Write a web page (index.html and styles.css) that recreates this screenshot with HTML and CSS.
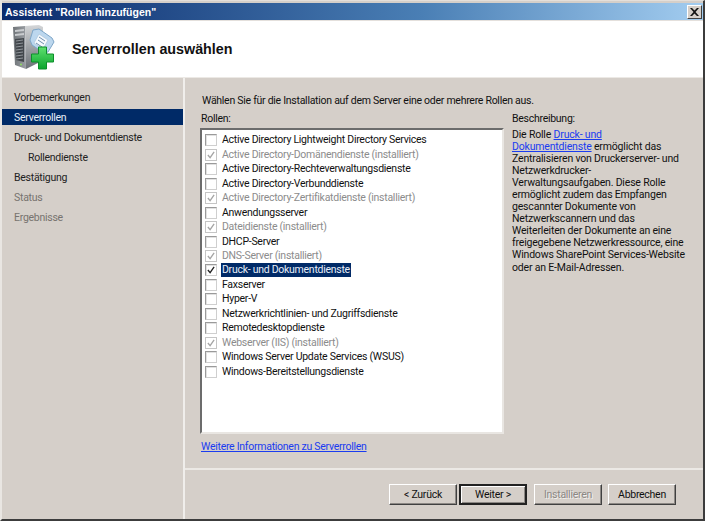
FILE: index.html
```html
<!DOCTYPE html>
<html lang="de">
<head>
<meta charset="utf-8">
<title>Assistent "Rollen hinzufügen"</title>
<link rel="stylesheet" href="styles.css">
</head>
<body>
<div class="window">
  <div class="titlebar">
    <span class="title">Assistent "Rollen hinzufügen"</span>
    <span class="close"><svg width="9" height="8" viewBox="0 0 9 8"><path d="M0 0h2l2.500 2.500L7 0h2L5.500 4 9 8H7L4.500 5.500 2 8H0l3.500-4z" fill="#111"/></svg></span>
  </div>
  <header class="header">
    <svg class="logo" width="42" height="46" viewBox="0 0 42 46">
      <defs>
        <linearGradient id="front" x1="0" x2="1" y1="0" y2="0"><stop offset="0" stop-color="#6f7478"/><stop offset="1" stop-color="#9a9ea3"/></linearGradient>
        <linearGradient id="side" x1="0" x2="0" y1="0" y2="1"><stop offset="0" stop-color="#d4d6d8"/><stop offset="1" stop-color="#6b7076"/></linearGradient>
        <linearGradient id="plus" x1="0" x2="0" y1="0" y2="1"><stop offset="0" stop-color="#5fe070"/><stop offset="1" stop-color="#0aa52c"/></linearGradient>
      </defs>
      <path d="M0 2l12-1 1 43-11-4z" fill="url(#front)"/>
      <path d="M12 1l14-1 4 2-1 34-16 8z" fill="url(#side)"/>
      <path d="M2 5l9-1v2l-9 1zM2 9l9-1v2l-9 1z" fill="#c9cccf"/>
      <path d="M2 14l9-1v24l-8-2z" fill="#42474c"/>
      <path d="M3 16l7-1M3 19l7-1M3 22l7-1M3 25l7-1M3 28l7-1M3 31l7-1M3 34l7-1" stroke="#8f9499" stroke-width="1"/>
      <circle cx="8" cy="39.500" r="1" fill="#8fe060"/>
      <path d="M20 5l6-1 13 9 2 4-6 10-4 1-12-8-2-5z" fill="#bcd7ee" stroke="#7ea6c8"/>
      <path d="M26 9l9 6-5 9-9-6z" fill="#f5f9fd" stroke="#a5bfd5" stroke-width=".6"/>
      <path d="M26 12l6 4M25 15l6 4M23 18l6 4" stroke="#6e8fae" stroke-width="1"/>
      <path d="M25.500 22h8v7h7v8h-7v7h-8v-7h-7v-8h7z" fill="url(#plus)" stroke="#0c8f2b" stroke-width="1"/>
    </svg>
    <h1 class="heading">Serverrollen auswählen</h1>
  </header>
  <div class="body">
    <nav class="sidebar">
      <div class="step">Vorbemerkungen</div>
      <div class="step current">Serverrollen</div>
      <div class="step">Druck- und Dokumentdienste</div>
      <div class="step sub">Rollendienste</div>
      <div class="step">Bestätigung</div>
      <div class="step muted">Status</div>
      <div class="step muted">Ergebnisse</div>
    </nav>
    <div class="pane">
      <main class="content">
        <p class="intro">Wählen Sie für die Installation auf dem Server eine oder mehrere Rollen aus.</p>
        <div class="columns">
          <section class="roles">
            <div class="label">Rollen:</div>
            <ul class="listbox">
              <li class="item"><span class="box"></span><span class="text">Active Directory Lightweight Directory Services</span></li>
              <li class="item off"><span class="box on"><svg width="9" height="9" viewBox="0 0 9 9"><path d="M1 4.500l2.500 3L8 1" class="tick"/></svg></span><span class="text">Active Directory-Domänendienste (installiert)</span></li>
              <li class="item"><span class="box"></span><span class="text">Active Directory-Rechteverwaltungsdienste</span></li>
              <li class="item"><span class="box"></span><span class="text">Active Directory-Verbunddienste</span></li>
              <li class="item off"><span class="box on"><svg width="9" height="9" viewBox="0 0 9 9"><path d="M1 4.500l2.500 3L8 1" class="tick"/></svg></span><span class="text">Active Directory-Zertifikatdienste (installiert)</span></li>
              <li class="item"><span class="box"></span><span class="text">Anwendungsserver</span></li>
              <li class="item off"><span class="box on"><svg width="9" height="9" viewBox="0 0 9 9"><path d="M1 4.500l2.500 3L8 1" class="tick"/></svg></span><span class="text">Dateidienste (installiert)</span></li>
              <li class="item"><span class="box"></span><span class="text">DHCP-Server</span></li>
              <li class="item off"><span class="box on"><svg width="9" height="9" viewBox="0 0 9 9"><path d="M1 4.500l2.500 3L8 1" class="tick"/></svg></span><span class="text">DNS-Server (installiert)</span></li>
              <li class="item sel"><span class="box on"><svg width="9" height="9" viewBox="0 0 9 9"><path d="M1 4.500l2.500 3L8 1" class="tick"/></svg></span><span class="text">Druck- und Dokumentdienste</span></li>
              <li class="item"><span class="box"></span><span class="text">Faxserver</span></li>
              <li class="item"><span class="box"></span><span class="text">Hyper-V</span></li>
              <li class="item"><span class="box"></span><span class="text">Netzwerkrichtlinien- und Zugriffsdienste</span></li>
              <li class="item"><span class="box"></span><span class="text">Remotedesktopdienste</span></li>
              <li class="item off"><span class="box on"><svg width="9" height="9" viewBox="0 0 9 9"><path d="M1 4.500l2.500 3L8 1" class="tick"/></svg></span><span class="text">Webserver (IIS) (installiert)</span></li>
              <li class="item"><span class="box"></span><span class="text">Windows Server Update Services (WSUS)</span></li>
              <li class="item"><span class="box"></span><span class="text">Windows-Bereitstellungsdienste</span></li>
            </ul>
            <a class="link more" href="#">Weitere Informationen zu Serverrollen</a>
          </section>
          <aside class="desc">
            <div class="label">Beschreibung:</div>
            <p class="desc-text">Die Rolle <a class="link" href="#">Druck- und<br>Dokumentdienste</a> ermöglicht das<br>Zentralisieren von Druckerserver- und<br>Netzwerkdrucker-<br>Verwaltungsaufgaben. Diese Rolle<br>ermöglicht zudem das Empfangen<br>gescannter Dokumente von<br>Netzwerkscannern und das<br>Weiterleiten der Dokumente an eine<br>freigegebene Netzwerkressource, eine<br>Windows SharePoint Services-Website<br>oder an E-Mail-Adressen.</p>
          </aside>
        </div>
      </main>
      <footer class="footer">
        <button class="btn">&lt; Zurück</button>
        <button class="btn primary">Weiter &gt;</button>
        <button class="btn disabled" disabled>Installieren</button>
        <button class="btn cancel">Abbrechen</button>
      </footer>
    </div>
  </div>
</div>
</body>
</html>
```
FILE: styles.css
```css
* { box-sizing: border-box; }
html, body { margin: 0; padding: 0; }
body {
  width: 705px;
  height: 521px;
  overflow: hidden;
  font-family: Roboto, "Liberation Sans", sans-serif;
  font-size: 10.500px;
  letter-spacing: -.27px;
  color: #111;
  background: #d5cfc9;
}
.window {
  width: 705px;
  height: 521px;
  display: flex;
  flex-direction: column;
  background: #d5cfc9;
  border-top: 1px solid #e4dfda;
  border-left: 2px solid #e9e6e2;
  border-right: 2px solid #3c3c3c;
  border-bottom: 2px solid #3c3c3c;
  padding-top: 2px;
}
.titlebar {
  height: 17px;
  flex: none;
  display: flex;
  align-items: center;
  justify-content: space-between;
  padding: 0 1px 0 3px;
  background: linear-gradient(90deg, #0a2a6c 0%, #4a7fb5 60%, #a3cdf0 100%);
  color: #fff;
  font-family: "Liberation Sans", sans-serif;
  font-size: 10.500px;
  letter-spacing: 0;
  font-weight: 700;
}
.close {
  width: 15px;
  height: 14px;
  display: flex;
  align-items: center;
  justify-content: center;
  background: #d5cfc9;
  border: 1px solid;
  border-color: #fff #404040 #404040 #fff;
}
.header {
  height: 58px;
  flex: none;
  display: flex;
  align-items: center;
  background: #fff;
  border-bottom: 1px solid #ece9e5;
  border-top: 1px solid #e4e0dc;
  padding-left: 11px;
}
.logo { flex: none; margin-top: -2px; }
.heading {
  margin: 0 0 0 17px;
  font-family: "Liberation Sans", sans-serif;
  font-size: 14.300px;
  letter-spacing: 0;
  font-weight: 700;
  color: #111;
}
.body {
  flex: 1;
  display: flex;
  min-height: 0;
}
.sidebar {
  width: 183px;
  flex: none;
  border-right: 2px solid #f0eeeb;
  padding-top: 10px;
}
.step {
  height: 20px;
  line-height: 20px;
  padding-left: 12px;
  color: #222;
}
.step.sub { padding-left: 26px; }
.step.muted { color: #77736f; }
.step.current { background: #002a67; color: #e8eef8; height: 16px; line-height: 17px; margin: 1px 0 3px; }
.pane {
  flex: 1;
  min-width: 0;
  display: flex;
  flex-direction: column;
}
.content {
  flex: 1;
  min-height: 0;
  padding: 16px 0 0 15px;
  border-bottom: 2px solid #ece9e5;
}
.intro { margin: 0; line-height: 14px; padding-left: 2px; }
.columns { display: flex; margin-top: 4px; }
.roles { width: 304px; flex: none; }
.label { line-height: 14px; padding-left: 1px; height: 16px; }
.listbox {
  list-style: none;
  margin: 0;
  padding: 3px 0 0 1px;
  height: 306px;
  width: 304px;
  background: #fff;
  border: 2px solid;
  border-color: #6c6c6c #e9e6e2 #e9e6e2 #6c6c6c;
}
.item {
  height: 14.470px;
  display: flex;
  align-items: center;
  color: #111;
}
.box {
  width: 12px;
  height: 12px;
  flex: none;
  margin-left: 2px;
  background: #fff;
  border: 1px solid #9a9a9a;
  border-right-color: #cfcfcf;
  border-bottom-color: #cfcfcf;
  box-shadow: inset 1px 1px 0 #e2e2e2;
  display: flex;
  align-items: center;
  justify-content: center;
}
.box svg { width: 8px; height: 8px; }
.tick { fill: none; stroke: #222; stroke-width: 1.500; }
.off .tick { stroke: #a5a5a5; }
.off .box { border-color: #c5c5c5; box-shadow: none; }
.text { margin-left: 4px; padding: 0 1px; line-height: 14px; white-space: nowrap; }
.off .text { color: #8c8c8c; }
.sel .text { background: #002a67; color: #e8eef8; }
.link { color: #1a3cf0; text-decoration: underline; }
.more { display: block; margin-top: 6px; line-height: 14px; padding-left: 1px; }
.desc { margin-left: 8px; width: 190px; margin-top: -1px; }
.desc .label { padding-left: 0; height: 18px; line-height: 16px; }
.desc-text { margin: 0; line-height: 12.050px; letter-spacing: -.18px; white-space: nowrap; }
.footer {
  flex: none;
  height: 49px;
  display: flex;
  justify-content: flex-end;
  padding: 14px 27px 0 0;
}
.btn {
  width: 68px;
  height: 21px;
  padding: 0;
  font: inherit;
  letter-spacing: inherit;
  color: #111;
  background: #d5cfc9;
  border: 1px solid;
  border-color: #fff #404040 #404040 #fff;
  box-shadow: inset -1px -1px 0 #8c8884;
}
.btn.primary { margin-left: 2px; border: 2px solid #222; box-shadow: inset 1px 1px 0 #fff, inset -1px -1px 0 #8c8884; }
.btn.disabled { color: #8c8884; text-shadow: 1px 1px 0 #f2f0ee; margin-left: 7px; }
.btn.cancel { margin-left: 6px; }
```
